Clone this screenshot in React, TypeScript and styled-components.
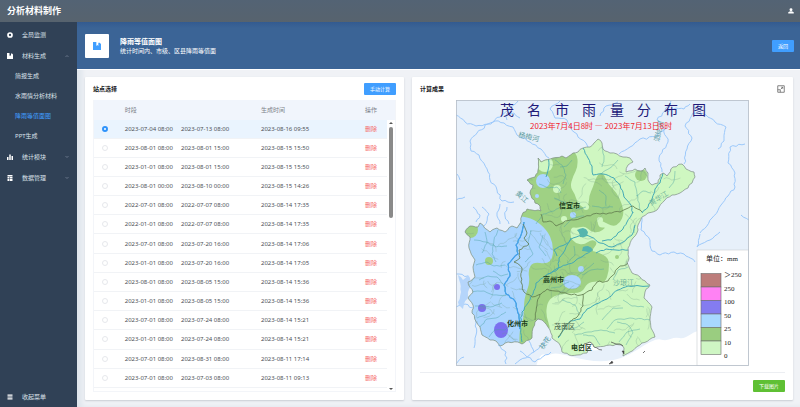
import React from 'react';
import styled, { createGlobalStyle } from 'styled-components';

const Global = createGlobalStyle`
  * { box-sizing: border-box; }
  body {
    margin: 0;
    background: #f0f2f6;
    font-family: "Noto Sans", "Noto Sans CJK SC", sans-serif;
    font-size: 6px;
    line-height: 8px;
    color: #4e5157;
  }
  button { font-family: inherit; cursor: pointer; }
  h1, h2, p { margin: 0; }
  a { text-decoration: none; color: inherit; }
`;

/* ---------- layout ---------- */

const Page = styled.div`
  min-height: 100vh;
  display: flex;
  flex-direction: column;
`;

const TopBar = styled.header`
  height: 22px;
  flex: none;
  padding: 0 6px 0 7px;
  display: flex;
  align-items: center;
  justify-content: space-between;
  background: linear-gradient(#536374, #57636e);
  color: #fff;
`;

const Brand = styled.h1`
  font-size: 9px;
  line-height: 12px;
  font-weight: 700;
`;

const UserButton = styled.button`
  border: 0;
  padding: 0;
  background: none;
  color: #fff;
  display: flex;
  svg { width: 6px; height: 6px; }
`;

const Body = styled.div`
  flex: 1;
  display: flex;
`;

const Sidebar = styled.nav`
  width: 77px;
  flex: none;
  padding: 2px 0 0;
  background: #304156;
  color: #dbe2ea;
  display: flex;
  flex-direction: column;
`;

const MenuItem = styled.a`
  height: 21px;
  padding: 0 8px 0 7px;
  display: flex;
  align-items: center;
  svg { width: 6px; height: 6px; flex: none; color: #fff; }
  svg:last-child:not(:first-child) { width: 4px; height: 4px; color: #8290a2; }
`;

const MenuText = styled.span`
  flex: 1;
  margin-left: 9px;
  white-space: nowrap;
`;

const SubItem = styled.a<{ $active?: boolean }>`
  height: 20px;
  padding-left: 15px;
  display: flex;
  align-items: center;
  color: ${(p) => (p.$active ? '#409eff' : '#dbe2ea')};
`;

const Collapse = styled(MenuItem)`
  margin-top: auto;
`;

const Main = styled.main`
  flex: 1;
  min-width: 0;
  display: flex;
  flex-direction: column;
  box-shadow: inset 5px 0 5px #dfe5ec;
`;

const Banner = styled.section`
  height: 48px;
  flex: none;
  padding: 0 6px 0 8px;
  display: flex;
  align-items: center;
  background: linear-gradient(#335b90, #3b6496 6px, #3b6496);
  border-bottom: 1px solid #fff;
  color: #fff;
`;

const BannerIcon = styled.div`
  width: 24px;
  height: 24px;
  border-radius: 1px;
  background: #fff;
  color: #409eff;
  display: flex;
  align-items: center;
  justify-content: center;
  svg { width: 8px; height: 8px; }
`;

const BannerText = styled.div`
  flex: 1;
  margin-left: 11px;
  h2 { font-size: 7px; line-height: 10px; font-weight: 700; }
`;

const Button = styled.button<{ $color?: string }>`
  height: 12px;
  min-width: 22px;
  padding: 0 6px;
  border: 0;
  border-radius: 1px;
  background: ${(p) => p.$color ?? '#409eff'};
  color: #fff;
  font-size: 5px;
  line-height: 8px;
  white-space: nowrap;
`;

const Cards = styled.div`
  flex: 1;
  padding: 7px 7px 7px 8px;
  display: grid;
  grid-template-columns: 319fr 381fr;
  gap: 8px;
`;

const Card = styled.section`
  min-width: 0;
  padding: 6px 8px 8px;
  background: #fff;
  border-radius: 1px;
  box-shadow: 0 1px 2px #c8ccd3;
  display: flex;
  flex-direction: column;
`;

const CardHead = styled.div`
  height: 12px;
  margin-bottom: 5px;
  flex: none;
  display: flex;
  align-items: center;
  justify-content: space-between;
  color: #16181b;
  h2 { font-size: 6px; line-height: 8px; font-weight: 700; }
`;

const IconButton = styled.button`
  border: 0;
  padding: 0;
  background: none;
  color: #666;
  display: flex;
  svg { width: 8px; height: 8px; }
`;

/* ---------- record table ---------- */

const TableFrame = styled.div`
  flex: 1;
  display: flex;
  flex-direction: column;
  border: 1px solid #f3f5f9;
  border-top: 0;
`;

const HeadWrap = styled.div`
  flex: none;
  padding-right: 8px;
  background: #f1f5fc;
  color: #7d828a;
`;

const Scroll = styled.div`
  flex: 1;
  display: flex;
`;

const Table = styled.table`
  width: 100%;
  table-layout: fixed;
  border-collapse: collapse;
  th, td { padding: 0; text-align: left; font-weight: 400; white-space: nowrap; }
  th { height: 20px; }
`;

const BodyTable = styled(Table)`
  flex: 1;
  margin-bottom: 3px;
`;

const Row = styled.tr<{ $selected?: boolean }>`
  background: ${(p) => (p.$selected ? '#eaf4fe' : '#fff')};
  border-bottom: 1px solid #f1f3f6;
`;

const Radio = styled.input`
  appearance: none;
  display: block;
  width: 6px;
  height: 6px;
  margin: 0 0 0 8px;
  border: 1px solid #e6e8ec;
  border-radius: 50%;
  background: #fff;
  &:checked { border: 2px solid #2f93fb; }
`;

const Period = styled.span`
  display: flex;
  gap: 8px;
`;

const Delete = styled.button`
  display: block;
  border: 0;
  padding: 0;
  background: none;
  color: #f56c6c;
  font-size: 6px;
  line-height: 8px;
`;

const ScrollBar = styled.div`
  width: 8px;
  display: flex;
  flex-direction: column;
  align-items: center;
  padding: 2px 0 1px;
  color: #555;
  svg { width: 4px; height: 2px; flex: none; }
`;

const Thumb = styled.div`
  width: 4px;
  height: 34%;
  margin: 3px 0 auto;
  border-radius: 2px;
  background: #8a8a8a;
`;

/* ---------- map panel ---------- */

const MapSvg = styled.svg`
  flex: 1 1 0;
  width: 100%;
  height: 0;
  min-height: 160px;
  display: block;
`;

const CardFoot = styled.div`
  flex: none;
  margin-top: 6px;
  padding-top: 7px;
  border-top: 1px solid #eceef2;
  display: flex;
  justify-content: flex-end;
`;

/* ---------- icons ---------- */

const IconRing = () => (
  <svg viewBox="0 0 12 12"><circle cx="6" cy="6" r="4" fill="none" stroke="currentColor" strokeWidth="3.4" /></svg>
);
const IconBook = () => (
  <svg viewBox="0 0 12 12"><path fill="currentColor" d="M0 0h5v6l1.5-1.4L8 6V1h2l2 2v9H0z" /></svg>
);
const IconBars = () => (
  <svg viewBox="0 0 12 12"><path fill="currentColor" d="M0 6h3v6H0zM4.5 1h3v11h-3zM9 4h3v8H9z" /></svg>
);
const IconGrid = () => (
  <svg viewBox="0 0 12 12"><path fill="currentColor" d="M1 0h10v3H1zM1 4h4v3H1zM6 4h5v3H6zM1 8h4v4H1zM6 8h5v4H6z" /></svg>
);
const IconMenu = () => (
  <svg viewBox="0 0 12 12"><path fill="currentColor" d="M1 1h10v2.4H1zM1 4.8h10v2.4H1zM1 8.6h10V11H1z" /></svg>
);
const IconUser = () => (
  <svg viewBox="0 0 12 12"><circle cx="6" cy="3.4" r="2.9" fill="currentColor" /><path fill="currentColor" d="M.5 11V8.5Q3 6.5 6 6.5t5.5 2V11z" /></svg>
);
const IconExpand = () => (
  <svg viewBox="0 0 16 16" fill="none" stroke="currentColor" strokeWidth="1.6">
    <path d="M1.5 1.5h13v13h-13zM1.5 9.500h5v5M8.500 4.500h3v3M11.500 4.500l-4 4" />
  </svg>
);
const Chevron = ({ up }: { up?: boolean }) => (
  <svg viewBox="0 0 8 8" fill="none" stroke="currentColor" strokeWidth="1.3"><path d={up ? 'M1 6 4 3l3 3' : 'M1 2l3 3 3-3'} /></svg>
);
const Arrow = ({ up }: { up?: boolean }) => (
  <svg viewBox="0 0 8 4"><path fill="currentColor" d={up ? 'M0 4 4 0l4 4z' : 'M0 0h8L4 4z'} /></svg>
);

/* ---------- map geometry ---------- */

type Pt = [number, number];

const parse = (s: string): Pt[] => s.trim().split(/\s+/).map((p) => p.split(',').map(Number) as Pt);

const makeRandom = (seed: number) => {
  let v = seed;
  return () => {
    v = (v * 16807) % 2147483647;
    return v / 2147483647;
  };
};

/* Breaks every segment up with small sideways shifts, like a surveyed line. */
const rough = (s: string, amount = 1.1, close = false) => {
  const pts = parse(s);
  const rnd = makeRandom(Math.round(pts[0][0] * 71 + pts[0][1] * 13));
  const out: Pt[] = [];
  const count = close ? pts.length : pts.length - 1;
  for (let i = 0; i < count; i += 1) {
    const a = pts[i];
    const b = pts[(i + 1) % pts.length];
    const len = Math.hypot(b[0] - a[0], b[1] - a[1]);
    const steps = Math.max(1, Math.round(len / 3));
    for (let k = 0; k < steps; k += 1) {
      const t = k / steps;
      const j = k === 0 ? 0 : (rnd() - 0.5) * 2 * amount;
      out.push([a[0] + (b[0] - a[0]) * t - ((b[1] - a[1]) / len) * j, a[1] + (b[1] - a[1]) * t + ((b[0] - a[0]) / len) * j]);
    }
  }
  if (!close) out.push(pts[pts.length - 1]);
  return `M${out.map((p) => `${p[0].toFixed(1)} ${p[1].toFixed(1)}`).join('L')}${close ? 'Z' : ''}`;
};

/* Closed curve that runs softly through the midpoints of a polygon. */
const soft = (s: string) => {
  const p = parse(s);
  const mid = (a: Pt, b: Pt) => `${(a[0] + b[0]) / 2} ${(a[1] + b[1]) / 2}`;
  let d = `M${mid(p[p.length - 1], p[0])}`;
  p.forEach((q, i) => {
    d += `Q${q[0]} ${q[1]} ${mid(q, p[(i + 1) % p.length])}`;
  });
  return `${d}Z`;
};

const CITY = rough(`538,158 541,162 545,160 553,158 562,156 566,158 573,153 578,152 583,148 590,147 594,143 598,139 602,143 603,149 610,153 617,154 623,157 630,158 633,162 628,165 626,172
 635,169 641,171 645,168 648,173 648,180 652,185 658,183 660,175 663,173 667,176 673,167 682,164 686,169 694,172 695,177 688,188 680,193 672,195 665,200 657,210 648,213 642,217 638,225 638,230 633,238 628,248 629,258
 627,263 632,273 640,277 650,285 645,292 644,298 652,307 650,320 651,328 655,337 642,343 630,352 623,356 624,348 622,345 610,345 597,347 588,350 587,353 577,355 569,355 562,352 560,345 552,338 550,330 548,327 542,320
 538,319 535,322 533,328 532,338 522,344 518,342 508,342 500,346 496,341 490,340 482,335 480,327 472,313 473,305 468,298 473,292 468,282 475,277 473,267 475,260 469,248 470,237 465,232 470,226 478,227 480,223 490,232 497,228 505,232 512,226 517,228 521,222
 522,215 527,209 532,210 541,211 540,206 535,203 530,193 533,185 527,180 535,177 538,170`, 0.8, true);

const GREEN = soft(`525,150 560,145 577,152 578,167 573,176 570,187 575,194 577,202 584,209 589,204 589,196 593,187 597,175 603,172 608,184 617,193 622,204 624,214 620,223 613,227 603,221 597,220 599,228 607,227 598,233 590,231 585,226 577,228 571,227 570,237 575,243 584,245 592,239 598,243 591,251 598,252 609,258 609,271 605,283 597,281 587,283 582,293 566,293 553,296 547,303 546,316 551,330 545,326 530,350 505,350 515,300 515,215`);
const BLUE = soft(`440,215 495,215 520,216 534,219 547,230 553,243 553,258 547,264 533,262 528,270 530,283 524,298 524,318 519,330 520,360 450,370`);
const SEA = soft('532,380 540,353 548,356 556,352 590,362 622,360 655,338 666,341 675,337 684,339 697,330 710,330 710,380');

const MAIN_RIVERS = [
  '583,148 588,158 592,166 593,175 603,174 614,178 620,185 624,197 631,205 633,213',
  '663,173 660,183 655,189 652,199 648,207 642,213',
  '635,225 632,235 623,242 612,247 600,243 591,237 585,235 573,238 566,244 554,250 557,256',
  '633,212 627,222 621,231 611,240 602,241',
  '591,251 583,256 574,262 566,265 556,269 545,276 536,283 533,294 528,303 522,312 520,326 522,342',
  '524,222 521,235 516,245 518,254 508,264 510,276 504,285 506,294 515,301 519,315 520,329',
  '548,157 549,165 546,177',
  '649,286 640,286 628,286 618,290 607,299 596,304 587,309 580,319 570,321 558,338',
  '629,250 616,250 606,249 596,253',
  '571,238 565,250 559,258 558,269 548,274',
];

const CREEKS = [
  '555,160 562,165 566,175 563,184', '539,184 549,188 557,187 561,193', '572,160 567,166 560,167', '602,147 604,159 602,167', '618,160 610,168 601,174',
  '625,176 635,182 637,194 640,210', '675,171 674,181 669,188', '651,193 643,191 636,196', '536,224 543,214 554,211 563,205', '564,227 573,218 584,216',
  '554,198 564,202 575,209 586,207', '592,206 602,208 613,207', '599,190 606,196 606,206', '574,246 575,255 567,263', '594,263 585,270 577,276', '604,269 591,270 582,275',
  '551,288 560,287 569,282', '562,300 575,305 580,315', '575,335 588,332 601,330 615,333', '623,300 632,306 644,307', '607,329 615,320 630,318 650,320', '619,342 627,332 640,329', '602,320 613,308 623,308',
  '474,240 486,242 496,247 507,246', '476,265 487,262 494,266 505,265', '471,292 484,291 493,295 506,295', '475,306 490,307 502,303', '480,327 487,319 496,318 506,312', '489,337 495,330 505,330 514,323',
  '498,230 494,240 492,254 496,262', '485,232 487,243 482,253', '531,230 528,242 533,254 525,262', '543,235 539,247 546,256', '479,280 488,276 497,277 503,284', '477,318 490,313', '493,271 501,276 508,274',
  '626,345 633,333 628,325 617,322', '600,345 594,336 583,335', '613,280 618,270 628,267', '564,329 575,328 584,322',
];

const OUTER_RIVERS = [
  '456,115 465,122 476,126 488,124 495,121 504,123 513,127 517,135 530,142 541,149 549,158',
  '518,101 507,111 500,117 488,124 477,133 470,141 471,151 479,155 488,172 490,180 497,190 502,201 514,202',
  '520,118 514,113 507,113 507,120', '560,101 550,109 555,118 567,120 574,132 586,143 588,147',
  '456,200 465,197', '671,101 665,111 657,120 664,129 668,142 659,158 662,172',
  '693,113 685,126 692,138 687,149 684,164', '693,113 706,115 715,122 726,127 724,141 718,149', '690,104 684,109 676,108 668,112',
  '745,144 730,147 728,163 735,173 735,187 721,205 712,218 700,233',
  '666,128 656,137 640,139 630,147 619,154', '642,218 641,230 650,240 652,251 660,255 674,252 684,254 695,262', '700,234 697,247 710,240 720,232', '749,220 741,215',
  '456,274 468,276 473,292', '456,307 465,304 475,310', '456,364 464,357', '475,317 476,335 474,348', '498,345 506,352 506,364', '529,341 534,352 548,338', '520,351 535,362 551,352', '515,364 534,352', '482,207 489,214 484,226', '473,207 480,215 476,222', '500,204 497,216 500,224', '507,207 505,216 509,224', '618,102 606,106 600,116', '457,174 460,180',
];

const CREEK_TEXTURE = (() => {
  const rnd = makeRandom(4211);
  let d = '';
  for (let i = 0; i < 230; i += 1) {
    let x = 465 + rnd() * 230;
    let y = 145 + rnd() * 208;
    let a = rnd() * 6.28;
    d += `M${x.toFixed(1)} ${y.toFixed(1)}`;
    const n = 3 + Math.floor(rnd() * 6);
    for (let k = 0; k < n; k += 1) {
      a += (rnd() - 0.5) * 1.5;
      x += Math.cos(a) * 3;
      y += Math.sin(a) * 3;
      d += `L${x.toFixed(1)} ${y.toFixed(1)}`;
    }
  }
  return d;
})();

const DISTRICTS = [
  '541,214 543,222 550,221 556,226 565,221 574,220 584,217 593,214 600,214 609,213 620,212 626,209 633,206 642,212',
  '523,224 527,233 524,238 529,244 519,250 520,258 514,262 522,268 521,282 524,292 532,297 541,294 547,289 555,291 568,294 581,295 592,290 597,282 608,281 612,276 618,268 628,263',
  '540,294 537,305 535,320', '583,294 583,306 576,318 566,324 558,337',
];

const TITLE = '茂名市雨量分布图';
const TOWNS: [string, number, number, boolean][] = [['信宜市', 559, 208, true], ['高州市', 543, 282, true], ['化州市', 507, 326, true], ['茂南区', 554, 329, false], ['电白区', 571, 350, true]];
const LEGEND: [string, string][] = [['#bd7d7b', '＞250'], ['#ff82f4', '250'], ['#847cf0', '100'], ['#a8d8ff', '50'], ['#9acd80', '25'], ['#cff6c4', '10']];

const RainMap = () => (
  <MapSvg viewBox="456 100 293 266" role="img" aria-label="茂名市雨量分布图">
    <defs>
      <clipPath id="city"><path d={CITY} /></clipPath>
      <clipPath id="frame"><rect x="456" y="100" width="293" height="266" /></clipPath>
    </defs>
    <g clipPath="url(#frame)">
      <rect x="456" y="100" width="293" height="266" fill="#e7f0fa" />
      <path d={SEA} fill="#fff" />
      <g fill="none" stroke="#9cc9fa" strokeWidth="1">
        {OUTER_RIVERS.map((r) => <path key={r} d={rough(r)} />)}
      </g>
      <path d={rough('458,275 463,280 468,275 471,286 468,296 463,309 458,302 461,292', 1.2, true)} fill="#b5d5fb" />
      <g fontSize="7" fill="#5f9da0">
        <text x="518" y="137" transform="rotate(13 518 137)">杨梅河</text>
        <text x="515" y="194" transform="rotate(42 515 194)">黄江</text>
        <text x="659" y="142" transform="rotate(-78 659 142)">泗纶河</text>
        <text x="543" y="350" transform="rotate(-55 543 350)">袂花</text>
      </g>
      <g clipPath="url(#city)">
        <rect x="456" y="130" width="245" height="236" fill="#cff7c1" />
        <path d={GREEN} fill="#9fd184" />
        <path d={BLUE} fill="#acd6ff" />
        <g fill="#cff7c1">
          <circle cx="545" cy="164" r="8" /><circle cx="557" cy="189" r="4" /><circle cx="564" cy="219" r="3" /><circle cx="586" cy="207" r="3" /><circle cx="600" cy="220" r="3" />
        </g>
        <g fill="#acd6ff">
          <circle cx="543" cy="181" r="7" /><circle cx="573" cy="215" r="3" /><circle cx="537" cy="196" r="2" /><ellipse cx="572" cy="282" rx="9" ry="7" /><circle cx="581" cy="269" r="3" />
        </g>
        <g fill="#9fd184">
          <circle cx="641" cy="175" r="6" /><circle cx="489" cy="261" r="4" /><circle cx="470" cy="230" r="8" /><circle cx="617" cy="257" r="2" />
        </g>
        <g fill="#7b70ef">
          <circle cx="497" cy="287" r="3" /><circle cx="482" cy="308" r="4" /><ellipse cx="501" cy="330" rx="7" ry="8" />
        </g>
        <path d={CREEK_TEXTURE} fill="none" stroke="#709c8a" strokeOpacity="0.45" strokeWidth="0.6" />
        <g fill="none" stroke="#4ba3a6" strokeOpacity="0.75" strokeWidth="0.6">
          {CREEKS.map((r) => <path key={r} d={rough(r, 0.6)} />)}
        </g>
        <g fill="none" stroke="#43a9b5" strokeWidth="1">
          {MAIN_RIVERS.map((r) => <path key={r} d={rough(r, 0.7)} />)}
        </g>
        <path d={rough(MAIN_RIVERS[5], 0.7)} fill="none" stroke="#45a0ef" strokeWidth="1.2" />
        <path d={rough('577,230 583,228 588,232 587,236 580,237', 1, true)} fill="#56b5ad" />
        <path d={rough('583,247 588,246 593,250 588,252 582,251', 1, true)} fill="#56b5ad" />
      </g>
      <g fill="none" stroke="#5f7a4d" strokeWidth="0.8">
        {DISTRICTS.map((r) => <path key={r} d={rough(r, 0.9)} />)}
      </g>
      <path d={CITY} fill="none" stroke="#7d8c84" strokeWidth="0.7" />
      <path d={rough('580,351 584,344 590,342 594,347 602,350', 0.8)} fill="#fff" stroke="#444" strokeWidth="0.7" />
      <path d="M609 364l3-3 1 2zM643 353l2-2zM622 351l2 0 0 3z" fill="#444" stroke="#444" strokeWidth="0.5" />
      <path d="M611 342l5 2 4 0 3 2" fill="none" stroke="#444" strokeWidth="0.7" />
      <g fontSize="7" fill="#6fb39a">
        <text x="651" y="206" transform="rotate(-32 651 206)">黄华江</text>
        <text x="613" y="285">沙琅江</text>
      </g>
      <g fontSize="7">
        {TOWNS.map(([name, x, y, bold]) => (
          <text key={name} x={x} y={y} fill={bold ? '#1d3d1c' : '#567258'} fontWeight={bold ? 700 : 500}>{name}</text>
        ))}
      </g>
      <g fontSize="14" fill="#211a78">
        {TITLE.split('').map((c, i) => <text key={c} x={500 + Math.round(i * 27.4)} y="115">{c}</text>)}
      </g>
      <text x="530" y="129" fontSize="8" fill="#f0222c" fontFamily='"Noto Sans CJK SC", sans-serif'>2023年7月4日8时 — 2023年7月13日8时</text>
      <rect x="697" y="250" width="52" height="116" fill="#fff" stroke="#d0d4d8" strokeWidth="0.7" />
      <g fontFamily='"Liberation Serif", "Noto Sans CJK SC", serif' fontSize="7" fill="#222">
        <text x="706" y="261">单位：mm</text>
        {LEGEND.map(([color, label], i) => (
          <React.Fragment key={label}>
            <rect x="701" y={273.5 + i * 13.5} width="20" height="13.5" fill={color} stroke="#6d6d6d" strokeWidth="0.6" />
            <text x="724" y={277 + i * 13.5}>{label}</text>
          </React.Fragment>
        ))}
        <text x="724" y="358">0</text>
      </g>
    </g>
    <rect x="456.5" y="100.5" width="292" height="265" fill="none" stroke="#b5bec8" strokeWidth="0.8" />
  </MapSvg>
);

/* ---------- data ---------- */

const RECORDS: [string, string, string][] = [
  ['2023-07-04 08:00', '2023-07-13 08:00', '2023-08-16 09:55'],
  ['2023-08-01 08:00', '2023-08-01 15:00', '2023-08-15 15:50'],
  ['2023-01-01 08:00', '2023-08-01 15:00', '2023-08-15 15:50'],
  ['2023-08-01 00:00', '2023-08-10 00:00', '2023-08-15 14:26'],
  ['2022-07-01 08:00', '2022-07-07 08:00', '2023-08-14 17:35'],
  ['2022-01-01 08:00', '2022-07-07 08:00', '2023-08-14 17:35'],
  ['2023-07-01 08:00', '2023-07-20 16:00', '2023-08-14 17:06'],
  ['2023-01-01 08:00', '2023-07-20 16:00', '2023-08-14 17:05'],
  ['2023-08-01 08:00', '2023-08-05 15:00', '2023-08-14 15:36'],
  ['2023-01-01 08:00', '2023-08-05 15:00', '2023-08-14 15:36'],
  ['2023-07-01 08:00', '2023-07-24 08:00', '2023-08-14 15:21'],
  ['2023-01-01 08:00', '2023-07-24 08:00', '2023-08-14 15:21'],
  ['2023-07-01 08:00', '2023-08-31 08:00', '2023-08-11 17:14'],
  ['2023-07-01 08:00', '2023-07-03 08:00', '2023-08-11 09:13'],
];

const Columns = () => (
  <colgroup>
    <col width="10.5%" />
    <col width="46.5%" />
    <col width="35.5%" />
    <col />
  </colgroup>
);

export default function App() {
  const [selected, setSelected] = React.useState(0);
  return (
    <Page lang="zh-CN">
      <Global />
      <TopBar>
        <Brand>分析材料制作</Brand>
        <UserButton aria-label="用户"><IconUser /></UserButton>
      </TopBar>
      <Body>
        <Sidebar>
          <MenuItem href="#monitor"><IconRing /><MenuText>全局监测</MenuText></MenuItem>
          <MenuItem href="#material"><IconBook /><MenuText>材料生成</MenuText><Chevron up /></MenuItem>
          <SubItem href="#brief">简报生成</SubItem>
          <SubItem href="#analysis">水雨情分析材料</SubItem>
          <SubItem href="#contour" $active>降雨等值面图</SubItem>
          <SubItem href="#ppt">PPT生成</SubItem>
          <MenuItem href="#stats"><IconBars /><MenuText>统计模块</MenuText><Chevron /></MenuItem>
          <MenuItem href="#data"><IconGrid /><MenuText>数据管理</MenuText><Chevron /></MenuItem>
          <Collapse href="#collapse"><IconMenu /><MenuText>收起菜单</MenuText></Collapse>
        </Sidebar>
        <Main>
          <Banner>
            <BannerIcon><IconBook /></BannerIcon>
            <BannerText>
              <h2>降雨等值面图</h2>
              <p>统计时间内、市级、区县降雨等值面</p>
            </BannerText>
            <Button>返回</Button>
          </Banner>
          <Cards>
            <Card>
              <CardHead><h2>站点选择</h2><Button>手动计算</Button></CardHead>
              <TableFrame>
                <HeadWrap>
                  <Table>
                    <Columns />
                    <thead><tr><th aria-label="选择" /><th>时段</th><th>生成时间</th><th>操作</th></tr></thead>
                  </Table>
                </HeadWrap>
                <Scroll>
                  <BodyTable>
                    <Columns />
                    <tbody>
                      {RECORDS.map(([from, to, made], i) => (
                        <Row key={i} $selected={i === selected}>
                          <td><Radio type="radio" name="record" aria-label={`${from} ${to}`} checked={i === selected} onChange={() => setSelected(i)} /></td>
                          <td><Period><span>{from}</span><span>{to}</span></Period></td>
                          <td>{made}</td>
                          <td><Delete>删除</Delete></td>
                        </Row>
                      ))}
                    </tbody>
                  </BodyTable>
                  <ScrollBar><Arrow up /><Thumb /><Arrow /></ScrollBar>
                </Scroll>
              </TableFrame>
            </Card>
            <Card>
              <CardHead><h2>计算成果</h2><IconButton aria-label="全屏"><IconExpand /></IconButton></CardHead>
              <RainMap />
              <CardFoot><Button $color="#5fc034">下载图片</Button></CardFoot>
            </Card>
          </Cards>
        </Main>
      </Body>
    </Page>
  );
}
